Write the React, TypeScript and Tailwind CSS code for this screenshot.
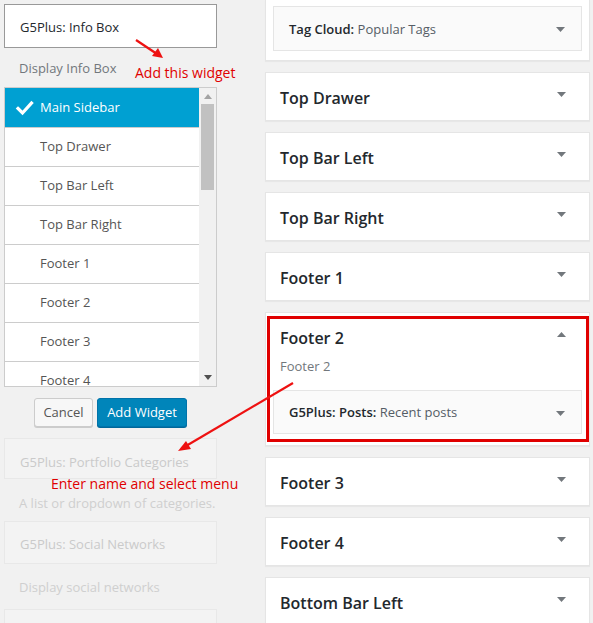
import React from "react";

const font = { fontFamily: '"Open Sans", "Noto Sans", sans-serif' };

function Caret({ up = false, className = "" }: { up?: boolean; className?: string }) {
  return (
    <svg width="9" height="5" viewBox="0 0 9 5" className={className}>
      {up ? <path d="M0 5 L4.5 0 L9 5 Z" fill="#72777c" /> : <path d="M0 0 L9 0 L4.5 5 Z" fill="#72777c" />}
    </svg>
  );
}

function Area({ title }: { title: string }) {
  return (
    <div className="shrink-0 bg-white border border-[#e5e5e5] shadow-[0_1px_1px_rgba(0,0,0,0.04)]">
      <div className="flex justify-between h-[47px] pl-[14px] pr-[23px]">
        <span className="mt-[14px] text-[16px] leading-[22px] font-semibold text-[#23282d]">{title}</span>
        <Caret className="mt-[19px]" />
      </div>
    </div>
  );
}

function InnerWidget({ bold, rest, h }: { bold: string; rest: string; h: string }) {
  return (
    <div className={`flex items-center justify-between ${h} mx-[7px] pt-[2px] pl-[15px] pr-[16px] bg-[#fafafa] border border-[#e5e5e5] text-[13px]`}>
      <span>
        <span className="font-semibold text-[#23282d]">{bold}</span>
        <span className="text-[#555d66]"> {rest}</span>
      </span>
      <Caret />
    </div>
  );
}

const items = ["Top Drawer", "Top Bar Left", "Top Bar Right", "Footer 1", "Footer 2", "Footer 3", "Footer 4"];

export default function App() {
  return (
    <div className="relative w-[593px] h-[623px] overflow-hidden bg-[#f1f1f1] flex pl-[4px]" style={font}>
      {/* Left column */}
      <div className="w-[213px] flex flex-col shrink-0">
        <div className="shrink-0 mt-[4px] h-[44px] bg-white border border-[#999] flex items-center pt-[3px] px-[15px] text-[13px] font-medium text-[#23282d]">
          G5Plus: Info Box
        </div>
        <div className="shrink-0 mt-[11px] px-[15px] text-[13px] leading-[18px] text-[#72777c]">Display Info Box</div>
        <div className="shrink-0 mt-[10px] h-[300px] border border-[#ccc] bg-white flex overflow-hidden">
          <div className="flex-1 flex flex-col">
            <div className="h-[39px] shrink-0 bg-[#00a0d2] flex items-center text-white text-[13px]">
              <svg width="35" height="20" viewBox="0 0 35 20" className="shrink-0">
                <path d="M13 10.5 L17.5 15 L26.5 5" stroke="#fff" strokeWidth="3.2" fill="none" strokeLinecap="square" />
              </svg>
              <span>Main Sidebar</span>
            </div>
            {items.map((it) => (
              <div key={it} className="h-[39px] shrink-0 border-t border-[#ccc] flex items-center pl-[35px] text-[13px] text-[#555]">
                {it}
              </div>
            ))}
          </div>
          <div className="w-[17px] shrink-0 bg-[#f1f1f1] flex flex-col items-center">
            <svg width="8" height="5" viewBox="0 0 8 5" className="mt-[6px] shrink-0">
              <path d="M0 5 L4 0 L8 5 Z" fill="#a3a3a3" />
            </svg>
            <div className="mt-[5px] w-[13px] h-[86px] shrink-0 bg-[#c1c1c1]" />
            <div className="flex-1" />
            <svg width="8" height="5" viewBox="0 0 8 5" className="mb-[6px] shrink-0">
              <path d="M0 0 L8 0 L4 5 Z" fill="#505050" />
            </svg>
          </div>
        </div>
        <div className="shrink-0 mt-[11px] flex justify-center gap-[4px]">
          <button className="h-[29px] w-[59px] rounded-[3px] border border-[#ccc] bg-[#f7f7f7] shadow-[0_1px_0_#ccc] text-[13px] text-[#555]">
            Cancel
          </button>
          <button className="h-[29px] w-[90px] rounded-[3px] border border-[#0073aa] bg-[#0085ba] shadow-[0_1px_0_#006799] text-[13px] text-white">
            Add Widget
          </button>
        </div>
        <div className="shrink-0 mt-[11px] h-[41px] border border-[#e8e8e8] bg-[#f3f3f3] flex items-center pt-[9px] px-[15px] text-[13px] font-medium text-[#cacaca] whitespace-nowrap">
          G5Plus: Portfolio Categories
        </div>
        <div className="shrink-0 mt-[15px] px-[15px] text-[13px] leading-[18px] text-[#cfcfcf] whitespace-nowrap">A list or dropdown of categories.</div>
        <div className="shrink-0 mt-[9px] h-[43px] border border-[#e8e8e8] bg-[#f3f3f3] flex items-center pt-[5px] px-[15px] text-[13px] font-medium text-[#cacaca] whitespace-nowrap">
          G5Plus: Social Networks
        </div>
        <div className="shrink-0 mt-[14px] px-[15px] text-[13px] leading-[18px] text-[#cfcfcf] whitespace-nowrap">Display social networks</div>
        <div className="shrink-0 mt-[13px] h-[43px] border border-[#e8e8e8] bg-[#f3f3f3]" />
      </div>

      {/* Right column */}
      <div className="ml-[48px] w-[325px] shrink-0 flex flex-col gap-[11px]">
        <div className="shrink-0 bg-white border border-t-0 border-[#e5e5e5] shadow-[0_1px_1px_rgba(0,0,0,0.04)] pt-[6px] pb-[9px]">
          <InnerWidget bold="Tag Cloud:" rest="Popular Tags" h="h-[45px]" />
        </div>
        <Area title="Top Drawer" />
        <Area title="Top Bar Left" />
        <Area title="Top Bar Right" />
        <Area title="Footer 1" />
        <div className="shrink-0 bg-white border border-[#e5e5e5] shadow-[0_1px_1px_rgba(0,0,0,0.04)] pb-[11px]">
          <div className="flex justify-between pl-[14px] pr-[23px]">
            <span className="mt-[14px] text-[16px] leading-[22px] font-semibold text-[#23282d]">Footer 2</span>
            <Caret up className="mt-[19px]" />
          </div>
          <div className="mt-[8px] pl-[14px] text-[13px] leading-[18px] text-[#72777c]">Footer 2</div>
          <div className="mt-[15px]">
            <InnerWidget bold="G5Plus: Posts:" rest="Recent posts" h="h-[44px]" />
          </div>
        </div>
        <Area title="Footer 3" />
        <Area title="Footer 4" />
        <Area title="Bottom Bar Left" />
      </div>

      {/* Annotations */}
      <div className="absolute left-[267px] top-[316px] w-[322px] h-[126px] border-[3px] border-[#e00000] pointer-events-none" />
      <div className="absolute left-[135px] top-[63px] text-[14px] leading-[20px] text-[#e00000]">Add this widget</div>
      <div className="absolute left-[51px] top-[474px] text-[14px] leading-[20px] text-[#e00000]">Enter name and select menu</div>
      <svg className="absolute left-0 top-0 pointer-events-none" width="593" height="623" viewBox="0 0 593 623">
        <line x1="136" y1="40" x2="157" y2="54" stroke="#ee1111" strokeWidth="2.2" />
        <path d="M163 58 L152 56 L158 48 Z" fill="#ee1111" />
        <line x1="293" y1="383" x2="186" y2="446" stroke="#ee1111" strokeWidth="2.2" />
        <path d="M178 451 L186 441 L191 449 Z" fill="#ee1111" />
      </svg>
    </div>
  );
}
